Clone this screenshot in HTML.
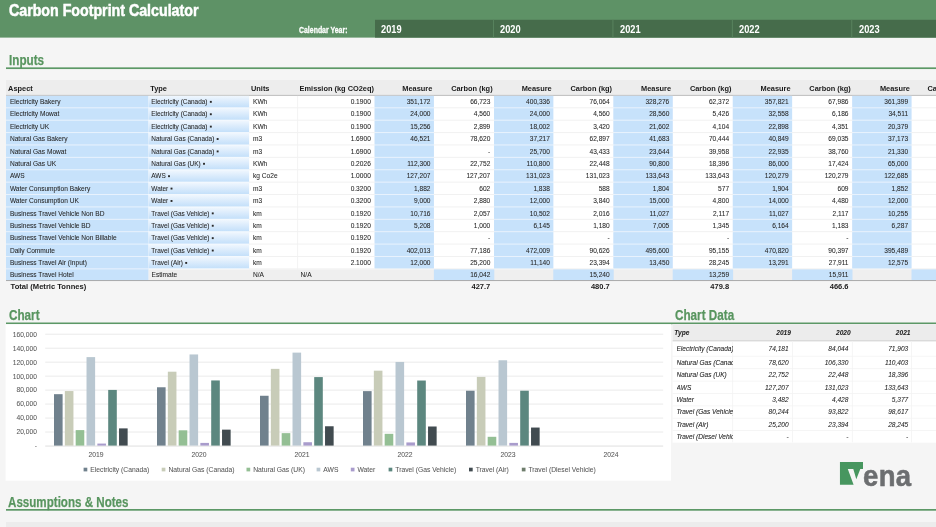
<!DOCTYPE html>
<html><head><meta charset="utf-8"><title>Carbon Footprint Calculator</title>
<style>
html,body{margin:0;padding:0;}
html{overflow:hidden;width:936px;height:527px;}
body{width:936px;height:527px;overflow:hidden;background:#f5f5f5;font-family:"Liberation Sans",sans-serif;position:relative;color:#3a3a3a;}
div,span{position:absolute;white-space:nowrap;}
svg{position:absolute;left:0;top:0;}
.c{transform-origin:0 50%;font-weight:bold;}
.h{font-weight:bold;font-size:7.4px;color:#1a1a1a;line-height:10px;}
.t{font-size:6.6px;line-height:10px;color:#262626;-webkit-text-stroke:.06px #262626;}
.r{text-align:right;}
.sec{color:#58955f;font-size:14.5px;line-height:16px;font-weight:bold;transform:scaleX(.807);transform-origin:0 50%;-webkit-text-stroke:.25px #58955f;}
.ax{font-size:6.7px;line-height:8px;color:#585858;-webkit-text-stroke:.05px #585858;}
.ci{font-style:italic;font-size:6.55px;line-height:10px;color:#202020;-webkit-text-stroke:.06px #202020;}
</style></head><body>
<svg width="936" height="527" viewBox="0 0 936 527"><defs><linearGradient id="tg" x1="0" y1="0" x2="0" y2="1"><stop offset="0" stop-color="#f0f7fe"/><stop offset=".45" stop-color="#dcecfc"/><stop offset="1" stop-color="#c4e0fa"/></linearGradient></defs>
<rect x="0.00" y="0.00" width="936.00" height="37.60" fill="#5e9266"/>
<rect x="375.00" y="19.80" width="561.00" height="17.80" fill="#466c4b"/>
<rect x="493.10" y="19.80" width="0.90" height="17.80" fill="#5a8560"/>
<rect x="612.50" y="19.80" width="0.90" height="17.80" fill="#5a8560"/>
<rect x="731.90" y="19.80" width="0.90" height="17.80" fill="#5a8560"/>
<rect x="851.30" y="19.80" width="0.90" height="17.80" fill="#5a8560"/>
<rect x="6.00" y="67.35" width="930.00" height="1.70" fill="#5c9866"/>
<rect x="6.00" y="80.10" width="930.00" height="15.10" fill="#ededed"/>
<rect x="6.00" y="94.90" width="930.00" height="1.00" fill="#b9b9b9"/>
<rect x="6.00" y="95.90" width="930.00" height="184.70" fill="#fff"/>
<rect x="297.30" y="95.90" width="0.80" height="184.70" fill="#f0f0f0"/>
<rect x="249.00" y="107.30" width="687.00" height="0.99" fill="#f1f1f1"/>
<rect x="249.00" y="119.69" width="687.00" height="0.99" fill="#f1f1f1"/>
<rect x="249.00" y="132.08" width="687.00" height="0.99" fill="#f1f1f1"/>
<rect x="249.00" y="144.47" width="687.00" height="0.99" fill="#f1f1f1"/>
<rect x="249.00" y="156.86" width="687.00" height="0.99" fill="#f1f1f1"/>
<rect x="249.00" y="169.25" width="687.00" height="0.99" fill="#f1f1f1"/>
<rect x="249.00" y="181.64" width="687.00" height="0.99" fill="#f1f1f1"/>
<rect x="249.00" y="194.03" width="687.00" height="0.99" fill="#f1f1f1"/>
<rect x="249.00" y="206.42" width="687.00" height="0.99" fill="#f1f1f1"/>
<rect x="249.00" y="218.81" width="687.00" height="0.99" fill="#f1f1f1"/>
<rect x="249.00" y="231.20" width="687.00" height="0.99" fill="#f1f1f1"/>
<rect x="249.00" y="243.59" width="687.00" height="0.99" fill="#f1f1f1"/>
<rect x="249.00" y="255.98" width="687.00" height="0.99" fill="#f1f1f1"/>
<rect x="249.00" y="268.37" width="687.00" height="0.99" fill="#f1f1f1"/>
<rect x="6.00" y="95.90" width="142.60" height="184.70" fill="#eaf3fd"/>
<rect x="6.00" y="95.90" width="142.60" height="11.40" fill="#c7e2fb"/>
<rect x="6.00" y="108.29" width="142.60" height="11.40" fill="#c7e2fb"/>
<rect x="6.00" y="120.68" width="142.60" height="11.40" fill="#c7e2fb"/>
<rect x="6.00" y="133.07" width="142.60" height="11.40" fill="#c7e2fb"/>
<rect x="6.00" y="145.46" width="142.60" height="11.40" fill="#c7e2fb"/>
<rect x="6.00" y="157.85" width="142.60" height="11.40" fill="#c7e2fb"/>
<rect x="6.00" y="170.24" width="142.60" height="11.40" fill="#c7e2fb"/>
<rect x="6.00" y="182.63" width="142.60" height="11.40" fill="#c7e2fb"/>
<rect x="6.00" y="195.02" width="142.60" height="11.40" fill="#c7e2fb"/>
<rect x="6.00" y="207.41" width="142.60" height="11.40" fill="#c7e2fb"/>
<rect x="6.00" y="219.80" width="142.60" height="11.40" fill="#c7e2fb"/>
<rect x="6.00" y="232.19" width="142.60" height="11.40" fill="#c7e2fb"/>
<rect x="6.00" y="244.58" width="142.60" height="11.40" fill="#c7e2fb"/>
<rect x="6.00" y="256.97" width="142.60" height="11.40" fill="#c7e2fb"/>
<rect x="6.00" y="269.36" width="142.60" height="11.24" fill="#c7e2fb"/>
<rect x="148.60" y="95.90" width="100.50" height="172.47" fill="#f4f9fe"/>
<rect x="148.60" y="95.90" width="100.50" height="11.40" fill="url(#tg)"/>
<rect x="148.60" y="108.29" width="100.50" height="11.40" fill="url(#tg)"/>
<rect x="148.60" y="120.68" width="100.50" height="11.40" fill="url(#tg)"/>
<rect x="148.60" y="133.07" width="100.50" height="11.40" fill="url(#tg)"/>
<rect x="148.60" y="145.46" width="100.50" height="11.40" fill="url(#tg)"/>
<rect x="148.60" y="157.85" width="100.50" height="11.40" fill="url(#tg)"/>
<rect x="148.60" y="170.24" width="100.50" height="11.40" fill="url(#tg)"/>
<rect x="148.60" y="182.63" width="100.50" height="11.40" fill="url(#tg)"/>
<rect x="148.60" y="195.02" width="100.50" height="11.40" fill="url(#tg)"/>
<rect x="148.60" y="207.41" width="100.50" height="11.40" fill="url(#tg)"/>
<rect x="148.60" y="219.80" width="100.50" height="11.40" fill="url(#tg)"/>
<rect x="148.60" y="232.19" width="100.50" height="11.40" fill="url(#tg)"/>
<rect x="148.60" y="244.58" width="100.50" height="11.40" fill="url(#tg)"/>
<rect x="148.60" y="256.97" width="100.50" height="11.40" fill="url(#tg)"/>
<rect x="374.60" y="95.90" width="59.30" height="172.47" fill="#eaf3fd"/>
<rect x="374.60" y="95.90" width="59.30" height="11.40" fill="#c7e2fb"/>
<rect x="374.60" y="108.29" width="59.30" height="11.40" fill="#c7e2fb"/>
<rect x="374.60" y="120.68" width="59.30" height="11.40" fill="#c7e2fb"/>
<rect x="374.60" y="133.07" width="59.30" height="11.40" fill="#c7e2fb"/>
<rect x="374.60" y="145.46" width="59.30" height="11.40" fill="#c7e2fb"/>
<rect x="374.60" y="157.85" width="59.30" height="11.40" fill="#c7e2fb"/>
<rect x="374.60" y="170.24" width="59.30" height="11.40" fill="#c7e2fb"/>
<rect x="374.60" y="182.63" width="59.30" height="11.40" fill="#c7e2fb"/>
<rect x="374.60" y="195.02" width="59.30" height="11.40" fill="#c7e2fb"/>
<rect x="374.60" y="207.41" width="59.30" height="11.40" fill="#c7e2fb"/>
<rect x="374.60" y="219.80" width="59.30" height="11.40" fill="#c7e2fb"/>
<rect x="374.60" y="232.19" width="59.30" height="11.40" fill="#c7e2fb"/>
<rect x="374.60" y="244.58" width="59.30" height="11.40" fill="#c7e2fb"/>
<rect x="374.60" y="256.97" width="59.30" height="11.40" fill="#c7e2fb"/>
<rect x="494.00" y="95.90" width="59.30" height="172.47" fill="#eaf3fd"/>
<rect x="494.00" y="95.90" width="59.30" height="11.40" fill="#c7e2fb"/>
<rect x="494.00" y="108.29" width="59.30" height="11.40" fill="#c7e2fb"/>
<rect x="494.00" y="120.68" width="59.30" height="11.40" fill="#c7e2fb"/>
<rect x="494.00" y="133.07" width="59.30" height="11.40" fill="#c7e2fb"/>
<rect x="494.00" y="145.46" width="59.30" height="11.40" fill="#c7e2fb"/>
<rect x="494.00" y="157.85" width="59.30" height="11.40" fill="#c7e2fb"/>
<rect x="494.00" y="170.24" width="59.30" height="11.40" fill="#c7e2fb"/>
<rect x="494.00" y="182.63" width="59.30" height="11.40" fill="#c7e2fb"/>
<rect x="494.00" y="195.02" width="59.30" height="11.40" fill="#c7e2fb"/>
<rect x="494.00" y="207.41" width="59.30" height="11.40" fill="#c7e2fb"/>
<rect x="494.00" y="219.80" width="59.30" height="11.40" fill="#c7e2fb"/>
<rect x="494.00" y="232.19" width="59.30" height="11.40" fill="#c7e2fb"/>
<rect x="494.00" y="244.58" width="59.30" height="11.40" fill="#c7e2fb"/>
<rect x="494.00" y="256.97" width="59.30" height="11.40" fill="#c7e2fb"/>
<rect x="613.40" y="95.90" width="59.30" height="172.47" fill="#eaf3fd"/>
<rect x="613.40" y="95.90" width="59.30" height="11.40" fill="#c7e2fb"/>
<rect x="613.40" y="108.29" width="59.30" height="11.40" fill="#c7e2fb"/>
<rect x="613.40" y="120.68" width="59.30" height="11.40" fill="#c7e2fb"/>
<rect x="613.40" y="133.07" width="59.30" height="11.40" fill="#c7e2fb"/>
<rect x="613.40" y="145.46" width="59.30" height="11.40" fill="#c7e2fb"/>
<rect x="613.40" y="157.85" width="59.30" height="11.40" fill="#c7e2fb"/>
<rect x="613.40" y="170.24" width="59.30" height="11.40" fill="#c7e2fb"/>
<rect x="613.40" y="182.63" width="59.30" height="11.40" fill="#c7e2fb"/>
<rect x="613.40" y="195.02" width="59.30" height="11.40" fill="#c7e2fb"/>
<rect x="613.40" y="207.41" width="59.30" height="11.40" fill="#c7e2fb"/>
<rect x="613.40" y="219.80" width="59.30" height="11.40" fill="#c7e2fb"/>
<rect x="613.40" y="232.19" width="59.30" height="11.40" fill="#c7e2fb"/>
<rect x="613.40" y="244.58" width="59.30" height="11.40" fill="#c7e2fb"/>
<rect x="613.40" y="256.97" width="59.30" height="11.40" fill="#c7e2fb"/>
<rect x="732.80" y="95.90" width="59.30" height="172.47" fill="#eaf3fd"/>
<rect x="732.80" y="95.90" width="59.30" height="11.40" fill="#c7e2fb"/>
<rect x="732.80" y="108.29" width="59.30" height="11.40" fill="#c7e2fb"/>
<rect x="732.80" y="120.68" width="59.30" height="11.40" fill="#c7e2fb"/>
<rect x="732.80" y="133.07" width="59.30" height="11.40" fill="#c7e2fb"/>
<rect x="732.80" y="145.46" width="59.30" height="11.40" fill="#c7e2fb"/>
<rect x="732.80" y="157.85" width="59.30" height="11.40" fill="#c7e2fb"/>
<rect x="732.80" y="170.24" width="59.30" height="11.40" fill="#c7e2fb"/>
<rect x="732.80" y="182.63" width="59.30" height="11.40" fill="#c7e2fb"/>
<rect x="732.80" y="195.02" width="59.30" height="11.40" fill="#c7e2fb"/>
<rect x="732.80" y="207.41" width="59.30" height="11.40" fill="#c7e2fb"/>
<rect x="732.80" y="219.80" width="59.30" height="11.40" fill="#c7e2fb"/>
<rect x="732.80" y="232.19" width="59.30" height="11.40" fill="#c7e2fb"/>
<rect x="732.80" y="244.58" width="59.30" height="11.40" fill="#c7e2fb"/>
<rect x="732.80" y="256.97" width="59.30" height="11.40" fill="#c7e2fb"/>
<rect x="852.20" y="95.90" width="59.30" height="172.47" fill="#eaf3fd"/>
<rect x="852.20" y="95.90" width="59.30" height="11.40" fill="#c7e2fb"/>
<rect x="852.20" y="108.29" width="59.30" height="11.40" fill="#c7e2fb"/>
<rect x="852.20" y="120.68" width="59.30" height="11.40" fill="#c7e2fb"/>
<rect x="852.20" y="133.07" width="59.30" height="11.40" fill="#c7e2fb"/>
<rect x="852.20" y="145.46" width="59.30" height="11.40" fill="#c7e2fb"/>
<rect x="852.20" y="157.85" width="59.30" height="11.40" fill="#c7e2fb"/>
<rect x="852.20" y="170.24" width="59.30" height="11.40" fill="#c7e2fb"/>
<rect x="852.20" y="182.63" width="59.30" height="11.40" fill="#c7e2fb"/>
<rect x="852.20" y="195.02" width="59.30" height="11.40" fill="#c7e2fb"/>
<rect x="852.20" y="207.41" width="59.30" height="11.40" fill="#c7e2fb"/>
<rect x="852.20" y="219.80" width="59.30" height="11.40" fill="#c7e2fb"/>
<rect x="852.20" y="232.19" width="59.30" height="11.40" fill="#c7e2fb"/>
<rect x="852.20" y="244.58" width="59.30" height="11.40" fill="#c7e2fb"/>
<rect x="852.20" y="256.97" width="59.30" height="11.40" fill="#c7e2fb"/>
<rect x="148.60" y="269.36" width="788.00" height="11.24" fill="#efefef"/>
<rect x="433.90" y="269.36" width="60.40" height="11.24" fill="#c7e2fb"/>
<rect x="553.30" y="269.36" width="60.40" height="11.24" fill="#c7e2fb"/>
<rect x="672.70" y="269.36" width="60.40" height="11.24" fill="#c7e2fb"/>
<rect x="792.10" y="269.36" width="60.40" height="11.24" fill="#c7e2fb"/>
<rect x="911.50" y="269.36" width="60.40" height="11.24" fill="#c7e2fb"/>
<rect x="6.00" y="280.10" width="930.00" height="0.95" fill="#a6a6a6"/>
<rect x="209.87" y="100.90" width="1.90" height="1.90" fill="#2a2a2a"/>
<rect x="209.87" y="113.29" width="1.90" height="1.90" fill="#2a2a2a"/>
<rect x="209.87" y="125.68" width="1.90" height="1.90" fill="#2a2a2a"/>
<rect x="216.69" y="138.07" width="1.90" height="1.90" fill="#2a2a2a"/>
<rect x="216.69" y="150.46" width="1.90" height="1.90" fill="#2a2a2a"/>
<rect x="203.06" y="162.85" width="1.90" height="1.90" fill="#2a2a2a"/>
<rect x="168.05" y="175.24" width="1.90" height="1.90" fill="#2a2a2a"/>
<rect x="170.56" y="187.63" width="1.90" height="1.90" fill="#2a2a2a"/>
<rect x="170.56" y="200.02" width="1.90" height="1.90" fill="#2a2a2a"/>
<rect x="211.79" y="212.41" width="1.90" height="1.90" fill="#2a2a2a"/>
<rect x="211.79" y="224.80" width="1.90" height="1.90" fill="#2a2a2a"/>
<rect x="211.79" y="237.19" width="1.90" height="1.90" fill="#2a2a2a"/>
<rect x="211.79" y="249.58" width="1.90" height="1.90" fill="#2a2a2a"/>
<rect x="185.25" y="261.97" width="1.90" height="1.90" fill="#2a2a2a"/>
<rect x="6.00" y="322.50" width="930.00" height="1.70" fill="#5c9866"/>
<rect x="5.60" y="324.20" width="665.40" height="156.50" fill="#fff"/>
<rect x="45.20" y="431.57" width="618.00" height="0.90" fill="#e8e8e8"/>
<rect x="45.20" y="417.60" width="618.00" height="0.90" fill="#e8e8e8"/>
<rect x="45.20" y="403.62" width="618.00" height="0.90" fill="#e8e8e8"/>
<rect x="45.20" y="389.65" width="618.00" height="0.90" fill="#e8e8e8"/>
<rect x="45.20" y="375.68" width="618.00" height="0.90" fill="#e8e8e8"/>
<rect x="45.20" y="361.70" width="618.00" height="0.90" fill="#e8e8e8"/>
<rect x="45.20" y="347.73" width="618.00" height="0.90" fill="#e8e8e8"/>
<rect x="45.20" y="333.75" width="618.00" height="0.90" fill="#e8e8e8"/>
<rect x="45.20" y="445.60" width="618.00" height="0.90" fill="#dcdcdc"/>
<rect x="54.00" y="394.17" width="8.60" height="51.43" fill="#70818d"/>
<rect x="64.84" y="391.06" width="8.60" height="54.54" fill="#c8ccb8"/>
<rect x="75.68" y="430.10" width="8.60" height="15.50" fill="#94bf94"/>
<rect x="86.52" y="357.11" width="8.60" height="88.49" fill="#b9c7d1"/>
<rect x="97.36" y="443.57" width="8.60" height="2.03" fill="#a99ccc"/>
<rect x="108.20" y="389.93" width="8.60" height="55.67" fill="#5c877f"/>
<rect x="119.04" y="428.39" width="8.60" height="17.21" fill="#414b50"/>
<rect x="157.00" y="387.27" width="8.60" height="58.33" fill="#70818d"/>
<rect x="167.84" y="371.70" width="8.60" height="73.90" fill="#c8ccb8"/>
<rect x="178.68" y="430.31" width="8.60" height="15.29" fill="#94bf94"/>
<rect x="189.52" y="354.45" width="8.60" height="91.15" fill="#b9c7d1"/>
<rect x="200.36" y="442.91" width="8.60" height="2.69" fill="#a99ccc"/>
<rect x="211.20" y="380.44" width="8.60" height="65.16" fill="#5c877f"/>
<rect x="222.04" y="429.65" width="8.60" height="15.95" fill="#414b50"/>
<rect x="260.00" y="395.76" width="8.60" height="49.84" fill="#70818d"/>
<rect x="270.84" y="368.86" width="8.60" height="76.74" fill="#c8ccb8"/>
<rect x="281.68" y="433.15" width="8.60" height="12.45" fill="#94bf94"/>
<rect x="292.52" y="352.62" width="8.60" height="92.98" fill="#b9c7d1"/>
<rect x="303.36" y="442.24" width="8.60" height="3.36" fill="#a99ccc"/>
<rect x="314.20" y="377.09" width="8.60" height="68.51" fill="#5c877f"/>
<rect x="325.04" y="426.26" width="8.60" height="19.34" fill="#414b50"/>
<rect x="363.00" y="391.13" width="8.60" height="54.47" fill="#70818d"/>
<rect x="373.84" y="370.68" width="8.60" height="74.92" fill="#c8ccb8"/>
<rect x="384.68" y="433.82" width="8.60" height="11.78" fill="#94bf94"/>
<rect x="395.52" y="361.96" width="8.60" height="83.64" fill="#b9c7d1"/>
<rect x="406.36" y="442.44" width="8.60" height="3.16" fill="#a99ccc"/>
<rect x="417.20" y="380.53" width="8.60" height="65.07" fill="#5c877f"/>
<rect x="428.04" y="426.50" width="8.60" height="19.10" fill="#414b50"/>
<rect x="466.00" y="390.73" width="8.60" height="54.87" fill="#70818d"/>
<rect x="476.84" y="376.91" width="8.60" height="68.69" fill="#c8ccb8"/>
<rect x="487.68" y="436.80" width="8.60" height="8.80" fill="#94bf94"/>
<rect x="498.52" y="360.27" width="8.60" height="85.33" fill="#b9c7d1"/>
<rect x="509.36" y="442.90" width="8.60" height="2.70" fill="#a99ccc"/>
<rect x="520.20" y="390.72" width="8.60" height="54.88" fill="#5c877f"/>
<rect x="531.04" y="427.55" width="8.60" height="18.05" fill="#414b50"/>
<rect x="83.60" y="467.70" width="3.70" height="3.70" fill="#70818d"/>
<rect x="161.70" y="467.70" width="3.70" height="3.70" fill="#c8ccb8"/>
<rect x="246.50" y="467.70" width="3.70" height="3.70" fill="#94bf94"/>
<rect x="316.60" y="467.70" width="3.70" height="3.70" fill="#b9c7d1"/>
<rect x="350.80" y="467.70" width="3.70" height="3.70" fill="#a99ccc"/>
<rect x="388.60" y="467.70" width="3.70" height="3.70" fill="#5c877f"/>
<rect x="469.00" y="467.70" width="3.70" height="3.70" fill="#414b50"/>
<rect x="521.80" y="467.70" width="3.70" height="3.70" fill="#6e7d6c"/>
<rect x="672.60" y="324.20" width="263.40" height="118.50" fill="#fff"/>
<rect x="672.60" y="324.20" width="263.40" height="16.40" fill="#ececec"/>
<rect x="672.60" y="340.40" width="263.40" height="0.90" fill="#cbcbcb"/>
<rect x="672.60" y="355.80" width="263.40" height="0.80" fill="#f3f3f3"/>
<rect x="672.60" y="368.30" width="263.40" height="0.80" fill="#f3f3f3"/>
<rect x="672.60" y="380.70" width="263.40" height="0.80" fill="#f3f3f3"/>
<rect x="672.60" y="393.10" width="263.40" height="0.80" fill="#f3f3f3"/>
<rect x="672.60" y="405.50" width="263.40" height="0.80" fill="#f3f3f3"/>
<rect x="672.60" y="417.80" width="263.40" height="0.80" fill="#f3f3f3"/>
<rect x="672.60" y="430.10" width="263.40" height="0.80" fill="#f3f3f3"/>
<rect x="732.30" y="341.30" width="0.80" height="101.10" fill="#f3f3f3"/>
<rect x="792.20" y="341.30" width="0.80" height="101.10" fill="#f3f3f3"/>
<rect x="851.90" y="341.30" width="0.80" height="101.10" fill="#f3f3f3"/>
<rect x="911.20" y="341.30" width="0.80" height="101.10" fill="#f3f3f3"/>
<polygon points="839.95,461.95 863,461.95 863,468.9 860.3,468.9 856.3,479.2 853.3,468.9 847.8,468.9 853.6,484.8 839.95,484.8" fill="#47965f"/>
<rect x="6.00" y="509.00" width="930.00" height="1.70" fill="#5c9866"/>
<rect x="6.00" y="522.00" width="930.00" height="5.00" fill="#ececec"/>
</svg>
<div id="tx" style="left:0;top:0;width:936px;height:527px;overflow:hidden;will-change:transform">
<div class="c" style="left:9.3px;top:0.07px;font-size:17.4px;line-height:20px;color:#fff;transform:scaleX(.817);-webkit-text-stroke:.55px #fff">Carbon Footprint Calculator</div>
<div class="c" style="left:299.4px;top:23.81px;font-size:9.5px;line-height:12px;color:#fff;transform:scaleX(.73);-webkit-text-stroke:.3px #fff">Calendar Year:</div>
<div class="c" style="left:380.9px;top:23.64px;font-size:10px;line-height:12px;color:#fff;transform:scaleX(.926)">2019</div>
<div class="c" style="left:500.3px;top:23.64px;font-size:10px;line-height:12px;color:#fff;transform:scaleX(.926)">2020</div>
<div class="c" style="left:619.7px;top:23.64px;font-size:10px;line-height:12px;color:#fff;transform:scaleX(.926)">2021</div>
<div class="c" style="left:739.1px;top:23.64px;font-size:10px;line-height:12px;color:#fff;transform:scaleX(.926)">2022</div>
<div class="c" style="left:858.5px;top:23.64px;font-size:10px;line-height:12px;color:#fff;transform:scaleX(.926)">2023</div>
<div class="sec" style="left:8.8px;top:52.08px">Inputs</div>
<div class="h" style="left:8.1px;top:83.54px">Aspect</div>
<div class="h" style="left:150.2px;top:83.54px">Type</div>
<div class="h" style="left:251.0px;top:83.54px">Units</div>
<div class="h" style="left:299.6px;top:83.54px">Emission (kg CO2eq)</div>
<div class="h r" style="left:352.3px;width:80px;top:83.54px">Measure</div>
<div class="h r" style="left:412.6px;width:80px;top:83.54px">Carbon (kg)</div>
<div class="h r" style="left:471.7px;width:80px;top:83.54px">Measure</div>
<div class="h r" style="left:532.0px;width:80px;top:83.54px">Carbon (kg)</div>
<div class="h r" style="left:591.1px;width:80px;top:83.54px">Measure</div>
<div class="h r" style="left:651.4px;width:80px;top:83.54px">Carbon (kg)</div>
<div class="h r" style="left:710.5px;width:80px;top:83.54px">Measure</div>
<div class="h r" style="left:770.8px;width:80px;top:83.54px">Carbon (kg)</div>
<div class="h r" style="left:829.9px;width:80px;top:83.54px">Measure</div>
<div class="h" style="left:927.4px;top:83.54px">Carbon (kg)</div>
<div class="t" style="left:9.9px;top:96.81px">Electricity Bakery</div>
<div class="t" style="left:151.3px;top:96.81px;font-size:6.45px">Electricity (Canada)</div>
<div class="t" style="left:253.0px;top:96.81px">KWh</div>
<div class="t r" style="left:300.8px;width:70px;top:96.81px">0.1900</div>
<div class="t r" style="left:360.5px;width:70px;top:96.81px">351,172</div>
<div class="t r" style="left:420.3px;width:70px;top:96.81px">66,723</div>
<div class="t r" style="left:479.9px;width:70px;top:96.81px">400,336</div>
<div class="t r" style="left:539.7px;width:70px;top:96.81px">76,064</div>
<div class="t r" style="left:599.3px;width:70px;top:96.81px">328,276</div>
<div class="t r" style="left:659.1px;width:70px;top:96.81px">62,372</div>
<div class="t r" style="left:718.7px;width:70px;top:96.81px">357,821</div>
<div class="t r" style="left:778.5px;width:70px;top:96.81px">67,986</div>
<div class="t r" style="left:838.1px;width:70px;top:96.81px">361,399</div>
<div class="t" style="left:9.9px;top:108.81px">Electricity Mowat</div>
<div class="t" style="left:151.3px;top:108.81px;font-size:6.45px">Electricity (Canada)</div>
<div class="t" style="left:253.0px;top:108.81px">KWh</div>
<div class="t r" style="left:300.8px;width:70px;top:108.81px">0.1900</div>
<div class="t r" style="left:360.5px;width:70px;top:108.81px">24,000</div>
<div class="t r" style="left:420.3px;width:70px;top:108.81px">4,560</div>
<div class="t r" style="left:479.9px;width:70px;top:108.81px">24,000</div>
<div class="t r" style="left:539.7px;width:70px;top:108.81px">4,560</div>
<div class="t r" style="left:599.3px;width:70px;top:108.81px">28,560</div>
<div class="t r" style="left:659.1px;width:70px;top:108.81px">5,426</div>
<div class="t r" style="left:718.7px;width:70px;top:108.81px">32,558</div>
<div class="t r" style="left:778.5px;width:70px;top:108.81px">6,186</div>
<div class="t r" style="left:838.1px;width:70px;top:108.81px">34,511</div>
<div class="t" style="left:9.9px;top:121.81px">Electricity UK</div>
<div class="t" style="left:151.3px;top:121.81px;font-size:6.45px">Electricity (Canada)</div>
<div class="t" style="left:253.0px;top:121.81px">KWh</div>
<div class="t r" style="left:300.8px;width:70px;top:121.81px">0.1900</div>
<div class="t r" style="left:360.5px;width:70px;top:121.81px">15,256</div>
<div class="t r" style="left:420.3px;width:70px;top:121.81px">2,899</div>
<div class="t r" style="left:479.9px;width:70px;top:121.81px">18,002</div>
<div class="t r" style="left:539.7px;width:70px;top:121.81px">3,420</div>
<div class="t r" style="left:599.3px;width:70px;top:121.81px">21,602</div>
<div class="t r" style="left:659.1px;width:70px;top:121.81px">4,104</div>
<div class="t r" style="left:718.7px;width:70px;top:121.81px">22,898</div>
<div class="t r" style="left:778.5px;width:70px;top:121.81px">4,351</div>
<div class="t r" style="left:838.1px;width:70px;top:121.81px">20,379</div>
<div class="t" style="left:9.9px;top:133.81px">Natural Gas Bakery</div>
<div class="t" style="left:151.3px;top:133.81px;font-size:6.45px">Natural Gas (Canada)</div>
<div class="t" style="left:253.0px;top:133.81px">m3</div>
<div class="t r" style="left:300.8px;width:70px;top:133.81px">1.6900</div>
<div class="t r" style="left:360.5px;width:70px;top:133.81px">46,521</div>
<div class="t r" style="left:420.3px;width:70px;top:133.81px">78,620</div>
<div class="t r" style="left:479.9px;width:70px;top:133.81px">37,217</div>
<div class="t r" style="left:539.7px;width:70px;top:133.81px">62,897</div>
<div class="t r" style="left:599.3px;width:70px;top:133.81px">41,683</div>
<div class="t r" style="left:659.1px;width:70px;top:133.81px">70,444</div>
<div class="t r" style="left:718.7px;width:70px;top:133.81px">40,849</div>
<div class="t r" style="left:778.5px;width:70px;top:133.81px">69,035</div>
<div class="t r" style="left:838.1px;width:70px;top:133.81px">37,173</div>
<div class="t" style="left:9.9px;top:146.81px">Natural Gas Mowat</div>
<div class="t" style="left:151.3px;top:146.81px;font-size:6.45px">Natural Gas (Canada)</div>
<div class="t" style="left:253.0px;top:146.81px">m3</div>
<div class="t r" style="left:300.8px;width:70px;top:146.81px">1.6900</div>
<div class="t r" style="left:420.3px;width:70px;top:146.81px">-</div>
<div class="t r" style="left:479.9px;width:70px;top:146.81px">25,700</div>
<div class="t r" style="left:539.7px;width:70px;top:146.81px">43,433</div>
<div class="t r" style="left:599.3px;width:70px;top:146.81px">23,644</div>
<div class="t r" style="left:659.1px;width:70px;top:146.81px">39,958</div>
<div class="t r" style="left:718.7px;width:70px;top:146.81px">22,935</div>
<div class="t r" style="left:778.5px;width:70px;top:146.81px">38,760</div>
<div class="t r" style="left:838.1px;width:70px;top:146.81px">21,330</div>
<div class="t" style="left:9.9px;top:158.81px">Natural Gas UK</div>
<div class="t" style="left:151.3px;top:158.81px;font-size:6.45px">Natural Gas (UK)</div>
<div class="t" style="left:253.0px;top:158.81px">KWh</div>
<div class="t r" style="left:300.8px;width:70px;top:158.81px">0.2026</div>
<div class="t r" style="left:360.5px;width:70px;top:158.81px">112,300</div>
<div class="t r" style="left:420.3px;width:70px;top:158.81px">22,752</div>
<div class="t r" style="left:479.9px;width:70px;top:158.81px">110,800</div>
<div class="t r" style="left:539.7px;width:70px;top:158.81px">22,448</div>
<div class="t r" style="left:599.3px;width:70px;top:158.81px">90,800</div>
<div class="t r" style="left:659.1px;width:70px;top:158.81px">18,396</div>
<div class="t r" style="left:718.7px;width:70px;top:158.81px">86,000</div>
<div class="t r" style="left:778.5px;width:70px;top:158.81px">17,424</div>
<div class="t r" style="left:838.1px;width:70px;top:158.81px">65,000</div>
<div class="t" style="left:9.9px;top:170.81px">AWS</div>
<div class="t" style="left:151.3px;top:170.81px;font-size:6.45px">AWS</div>
<div class="t" style="left:253.0px;top:170.81px">kg Co2e</div>
<div class="t r" style="left:300.8px;width:70px;top:170.81px">1.0000</div>
<div class="t r" style="left:360.5px;width:70px;top:170.81px">127,207</div>
<div class="t r" style="left:420.3px;width:70px;top:170.81px">127,207</div>
<div class="t r" style="left:479.9px;width:70px;top:170.81px">131,023</div>
<div class="t r" style="left:539.7px;width:70px;top:170.81px">131,023</div>
<div class="t r" style="left:599.3px;width:70px;top:170.81px">133,643</div>
<div class="t r" style="left:659.1px;width:70px;top:170.81px">133,643</div>
<div class="t r" style="left:718.7px;width:70px;top:170.81px">120,279</div>
<div class="t r" style="left:778.5px;width:70px;top:170.81px">120,279</div>
<div class="t r" style="left:838.1px;width:70px;top:170.81px">122,685</div>
<div class="t" style="left:9.9px;top:183.81px">Water Consumption Bakery</div>
<div class="t" style="left:151.3px;top:183.81px;font-size:6.45px">Water</div>
<div class="t" style="left:253.0px;top:183.81px">m3</div>
<div class="t r" style="left:300.8px;width:70px;top:183.81px">0.3200</div>
<div class="t r" style="left:360.5px;width:70px;top:183.81px">1,882</div>
<div class="t r" style="left:420.3px;width:70px;top:183.81px">602</div>
<div class="t r" style="left:479.9px;width:70px;top:183.81px">1,838</div>
<div class="t r" style="left:539.7px;width:70px;top:183.81px">588</div>
<div class="t r" style="left:599.3px;width:70px;top:183.81px">1,804</div>
<div class="t r" style="left:659.1px;width:70px;top:183.81px">577</div>
<div class="t r" style="left:718.7px;width:70px;top:183.81px">1,904</div>
<div class="t r" style="left:778.5px;width:70px;top:183.81px">609</div>
<div class="t r" style="left:838.1px;width:70px;top:183.81px">1,852</div>
<div class="t" style="left:9.9px;top:195.81px">Water Consumption UK</div>
<div class="t" style="left:151.3px;top:195.81px;font-size:6.45px">Water</div>
<div class="t" style="left:253.0px;top:195.81px">m3</div>
<div class="t r" style="left:300.8px;width:70px;top:195.81px">0.3200</div>
<div class="t r" style="left:360.5px;width:70px;top:195.81px">9,000</div>
<div class="t r" style="left:420.3px;width:70px;top:195.81px">2,880</div>
<div class="t r" style="left:479.9px;width:70px;top:195.81px">12,000</div>
<div class="t r" style="left:539.7px;width:70px;top:195.81px">3,840</div>
<div class="t r" style="left:599.3px;width:70px;top:195.81px">15,000</div>
<div class="t r" style="left:659.1px;width:70px;top:195.81px">4,800</div>
<div class="t r" style="left:718.7px;width:70px;top:195.81px">14,000</div>
<div class="t r" style="left:778.5px;width:70px;top:195.81px">4,480</div>
<div class="t r" style="left:838.1px;width:70px;top:195.81px">12,000</div>
<div class="t" style="left:9.9px;top:208.81px">Business Travel Vehicle Non BD</div>
<div class="t" style="left:151.3px;top:208.81px;font-size:6.45px">Travel (Gas Vehicle)</div>
<div class="t" style="left:253.0px;top:208.81px">km</div>
<div class="t r" style="left:300.8px;width:70px;top:208.81px">0.1920</div>
<div class="t r" style="left:360.5px;width:70px;top:208.81px">10,716</div>
<div class="t r" style="left:420.3px;width:70px;top:208.81px">2,057</div>
<div class="t r" style="left:479.9px;width:70px;top:208.81px">10,502</div>
<div class="t r" style="left:539.7px;width:70px;top:208.81px">2,016</div>
<div class="t r" style="left:599.3px;width:70px;top:208.81px">11,027</div>
<div class="t r" style="left:659.1px;width:70px;top:208.81px">2,117</div>
<div class="t r" style="left:718.7px;width:70px;top:208.81px">11,027</div>
<div class="t r" style="left:778.5px;width:70px;top:208.81px">2,117</div>
<div class="t r" style="left:838.1px;width:70px;top:208.81px">10,255</div>
<div class="t" style="left:9.9px;top:220.81px">Business Travel Vehicle BD</div>
<div class="t" style="left:151.3px;top:220.81px;font-size:6.45px">Travel (Gas Vehicle)</div>
<div class="t" style="left:253.0px;top:220.81px">km</div>
<div class="t r" style="left:300.8px;width:70px;top:220.81px">0.1920</div>
<div class="t r" style="left:360.5px;width:70px;top:220.81px">5,208</div>
<div class="t r" style="left:420.3px;width:70px;top:220.81px">1,000</div>
<div class="t r" style="left:479.9px;width:70px;top:220.81px">6,145</div>
<div class="t r" style="left:539.7px;width:70px;top:220.81px">1,180</div>
<div class="t r" style="left:599.3px;width:70px;top:220.81px">7,005</div>
<div class="t r" style="left:659.1px;width:70px;top:220.81px">1,345</div>
<div class="t r" style="left:718.7px;width:70px;top:220.81px">6,164</div>
<div class="t r" style="left:778.5px;width:70px;top:220.81px">1,183</div>
<div class="t r" style="left:838.1px;width:70px;top:220.81px">6,287</div>
<div class="t" style="left:9.9px;top:232.81px">Business Travel Vehicle Non Billable</div>
<div class="t" style="left:151.3px;top:232.81px;font-size:6.45px">Travel (Gas Vehicle)</div>
<div class="t" style="left:253.0px;top:232.81px">km</div>
<div class="t r" style="left:300.8px;width:70px;top:232.81px">0.1920</div>
<div class="t r" style="left:420.3px;width:70px;top:232.81px">-</div>
<div class="t r" style="left:539.7px;width:70px;top:232.81px">-</div>
<div class="t r" style="left:659.1px;width:70px;top:232.81px">-</div>
<div class="t r" style="left:778.5px;width:70px;top:232.81px">-</div>
<div class="t" style="left:9.9px;top:245.81px">Daily Commute</div>
<div class="t" style="left:151.3px;top:245.81px;font-size:6.45px">Travel (Gas Vehicle)</div>
<div class="t" style="left:253.0px;top:245.81px">km</div>
<div class="t r" style="left:300.8px;width:70px;top:245.81px">0.1920</div>
<div class="t r" style="left:360.5px;width:70px;top:245.81px">402,013</div>
<div class="t r" style="left:420.3px;width:70px;top:245.81px">77,186</div>
<div class="t r" style="left:479.9px;width:70px;top:245.81px">472,009</div>
<div class="t r" style="left:539.7px;width:70px;top:245.81px">90,626</div>
<div class="t r" style="left:599.3px;width:70px;top:245.81px">495,600</div>
<div class="t r" style="left:659.1px;width:70px;top:245.81px">95,155</div>
<div class="t r" style="left:718.7px;width:70px;top:245.81px">470,820</div>
<div class="t r" style="left:778.5px;width:70px;top:245.81px">90,397</div>
<div class="t r" style="left:838.1px;width:70px;top:245.81px">395,489</div>
<div class="t" style="left:9.9px;top:257.81px">Business Travel Air (Input)</div>
<div class="t" style="left:151.3px;top:257.81px;font-size:6.45px">Travel (Air)</div>
<div class="t" style="left:253.0px;top:257.81px">km</div>
<div class="t r" style="left:300.8px;width:70px;top:257.81px">2.1000</div>
<div class="t r" style="left:360.5px;width:70px;top:257.81px">12,000</div>
<div class="t r" style="left:420.3px;width:70px;top:257.81px">25,200</div>
<div class="t r" style="left:479.9px;width:70px;top:257.81px">11,140</div>
<div class="t r" style="left:539.7px;width:70px;top:257.81px">23,394</div>
<div class="t r" style="left:599.3px;width:70px;top:257.81px">13,450</div>
<div class="t r" style="left:659.1px;width:70px;top:257.81px">28,245</div>
<div class="t r" style="left:718.7px;width:70px;top:257.81px">13,291</div>
<div class="t r" style="left:778.5px;width:70px;top:257.81px">27,911</div>
<div class="t r" style="left:838.1px;width:70px;top:257.81px">12,575</div>
<div class="t" style="left:9.9px;top:269.81px">Business Travel Hotel</div>
<div class="t" style="left:151.5px;top:269.81px">Estimate</div>
<div class="t" style="left:253.0px;top:269.81px">N/A</div>
<div class="t" style="left:300.6px;top:269.81px">N/A</div>
<div class="t r" style="left:420.3px;width:70px;top:269.81px">16,042</div>
<div class="t r" style="left:539.7px;width:70px;top:269.81px">15,240</div>
<div class="t r" style="left:659.1px;width:70px;top:269.81px">13,259</div>
<div class="t r" style="left:778.5px;width:70px;top:269.81px">15,911</div>
<div class="h" style="left:10.6px;top:281.50px;font-size:7.6px">Total (Metric Tonnes)</div>
<div class="h r" style="left:420.3px;width:70px;top:281.50px;font-size:7.5px">427.7</div>
<div class="h r" style="left:539.7px;width:70px;top:281.50px;font-size:7.5px">480.7</div>
<div class="h r" style="left:659.1px;width:70px;top:281.50px;font-size:7.5px">479.8</div>
<div class="h r" style="left:778.5px;width:70px;top:281.50px;font-size:7.5px">466.6</div>
<div class="sec" style="left:8.8px;top:307.08px">Chart</div>
<div class="sec" style="left:675.2px;top:307.08px">Chart Data</div>
<div class="ax r" style="left:0;width:36.9px;top:330.78px">160,000</div>
<div class="ax r" style="left:0;width:36.9px;top:344.78px">140,000</div>
<div class="ax r" style="left:0;width:36.9px;top:358.78px">120,000</div>
<div class="ax r" style="left:0;width:36.9px;top:372.78px">100,000</div>
<div class="ax r" style="left:0;width:36.9px;top:385.78px">80,000</div>
<div class="ax r" style="left:0;width:36.9px;top:399.78px">60,000</div>
<div class="ax r" style="left:0;width:36.9px;top:413.78px">40,000</div>
<div class="ax r" style="left:0;width:36.9px;top:427.78px">20,000</div>
<div class="ax r" style="left:0;width:36.9px;top:441.78px">-</div>
<div class="ax" style="left:76.1px;width:40px;text-align:center;top:450.74px;font-size:6.8px">2019</div>
<div class="ax" style="left:179.1px;width:40px;text-align:center;top:450.74px;font-size:6.8px">2020</div>
<div class="ax" style="left:282.1px;width:40px;text-align:center;top:450.74px;font-size:6.8px">2021</div>
<div class="ax" style="left:385.1px;width:40px;text-align:center;top:450.74px;font-size:6.8px">2022</div>
<div class="ax" style="left:488.1px;width:40px;text-align:center;top:450.74px;font-size:6.8px">2023</div>
<div class="ax" style="left:591.1px;width:40px;text-align:center;top:450.74px;font-size:6.8px">2024</div>
<div class="ax" style="left:90.3px;top:465.76px;font-size:6.75px">Electricity (Canada)</div>
<div class="ax" style="left:168.4px;top:465.76px;font-size:6.75px">Natural Gas (Canada)</div>
<div class="ax" style="left:253.2px;top:465.76px;font-size:6.75px">Natural Gas (UK)</div>
<div class="ax" style="left:323.3px;top:465.76px;font-size:6.75px">AWS</div>
<div class="ax" style="left:357.5px;top:465.76px;font-size:6.75px">Water</div>
<div class="ax" style="left:395.3px;top:465.76px;font-size:6.75px">Travel (Gas Vehicle)</div>
<div class="ax" style="left:475.7px;top:465.76px;font-size:6.75px">Travel (Air)</div>
<div class="ax" style="left:528.5px;top:465.76px;font-size:6.75px">Travel (Diesel Vehicle)</div>
<div class="ci" style="left:674.3px;top:327.81px;font-weight:bold;font-size:6.6px;color:#222">Type</div>
<div class="ci r" style="left:730.9px;width:60px;top:327.81px;font-weight:bold;font-size:6.6px;color:#222">2019</div>
<div class="ci r" style="left:790.7px;width:60px;top:327.81px;font-weight:bold;font-size:6.6px;color:#222">2020</div>
<div class="ci r" style="left:850.5px;width:60px;top:327.81px;font-weight:bold;font-size:6.6px;color:#222">2021</div>
<div class="ci" style="left:676.5px;top:343.83px;width:56.2px;overflow:hidden">Electricity (Canada)</div>
<div class="ci r" style="left:728.6px;width:60px;top:343.83px">74,181</div>
<div class="ci r" style="left:788.4px;width:60px;top:343.83px">84,044</div>
<div class="ci r" style="left:848.2px;width:60px;top:343.83px">71,903</div>
<div class="ci" style="left:676.5px;top:357.83px;width:56.2px;overflow:hidden">Natural Gas (Canada)</div>
<div class="ci r" style="left:728.6px;width:60px;top:357.83px">78,620</div>
<div class="ci r" style="left:788.4px;width:60px;top:357.83px">106,330</div>
<div class="ci r" style="left:848.2px;width:60px;top:357.83px">110,403</div>
<div class="ci" style="left:676.5px;top:369.83px;width:56.2px;overflow:hidden">Natural Gas (UK)</div>
<div class="ci r" style="left:728.6px;width:60px;top:369.83px">22,752</div>
<div class="ci r" style="left:788.4px;width:60px;top:369.83px">22,448</div>
<div class="ci r" style="left:848.2px;width:60px;top:369.83px">18,396</div>
<div class="ci" style="left:676.5px;top:382.83px;width:56.2px;overflow:hidden">AWS</div>
<div class="ci r" style="left:728.6px;width:60px;top:382.83px">127,207</div>
<div class="ci r" style="left:788.4px;width:60px;top:382.83px">131,023</div>
<div class="ci r" style="left:848.2px;width:60px;top:382.83px">133,643</div>
<div class="ci" style="left:676.5px;top:394.83px;width:56.2px;overflow:hidden">Water</div>
<div class="ci r" style="left:728.6px;width:60px;top:394.83px">3,482</div>
<div class="ci r" style="left:788.4px;width:60px;top:394.83px">4,428</div>
<div class="ci r" style="left:848.2px;width:60px;top:394.83px">5,377</div>
<div class="ci" style="left:676.5px;top:406.83px;width:56.2px;overflow:hidden">Travel (Gas Vehicle)</div>
<div class="ci r" style="left:728.6px;width:60px;top:406.83px">80,244</div>
<div class="ci r" style="left:788.4px;width:60px;top:406.83px">93,822</div>
<div class="ci r" style="left:848.2px;width:60px;top:406.83px">98,617</div>
<div class="ci" style="left:676.5px;top:419.83px;width:56.2px;overflow:hidden">Travel (Air)</div>
<div class="ci r" style="left:728.6px;width:60px;top:419.83px">25,200</div>
<div class="ci r" style="left:788.4px;width:60px;top:419.83px">23,394</div>
<div class="ci r" style="left:848.2px;width:60px;top:419.83px">28,245</div>
<div class="ci" style="left:676.5px;top:431.83px;width:56.2px;overflow:hidden">Travel (Diesel Vehicle)</div>
<div class="ci r" style="left:728.6px;width:60px;top:431.83px">-</div>
<div class="ci r" style="left:788.4px;width:60px;top:431.83px">-</div>
<div class="ci r" style="left:848.2px;width:60px;top:431.83px">-</div>
<div class="c" style="left:862.9px;top:459.5px;font-size:29.6px;line-height:32px;color:#6c6e70;transform:scaleX(.93);letter-spacing:.35px;-webkit-text-stroke:.55px #6c6e70">ena</div>
<div class="sec" style="left:8.2px;top:494.08px;transform:scaleX(.8)">Assumptions &amp; Notes</div>
</div>
</body></html>
